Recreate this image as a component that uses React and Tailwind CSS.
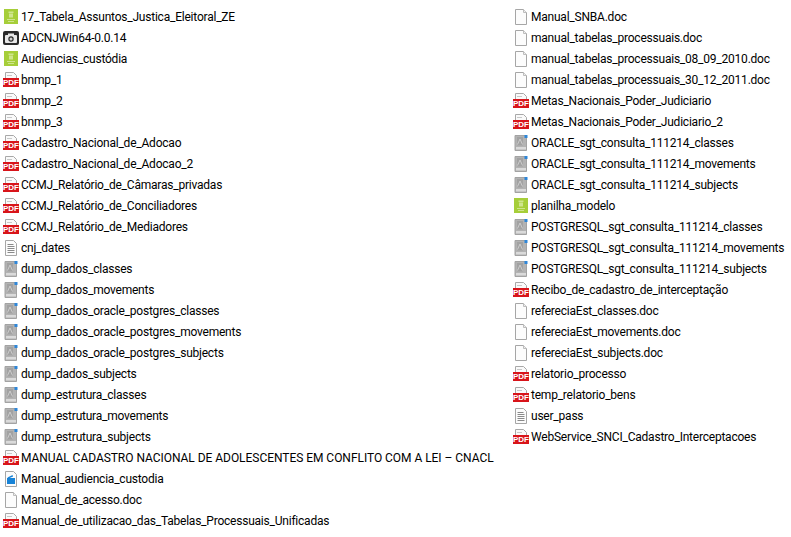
import React from 'react'

const PdfIcon = () => (
  <svg width="16" height="16" viewBox="0 0 16 16" className="shrink-0">
    <path d="M2.500 .5h8l3 3v4h-11z" fill="#fafafa" stroke="#a8a8a8" />
    <path d="M4 3.500h5" stroke="#c8c8c8" />
    <rect x="0" y="6" width="16" height="9" fill="#d8141a" />
    <text x="8" y="13.200" textAnchor="middle" fill="#fff" fontSize="8" fontWeight="700" fontFamily="Liberation Sans, sans-serif">PDF</text>
  </svg>
)

const SheetIcon = () => (
  <svg width="16" height="16" viewBox="0 0 16 16" className="shrink-0">
    <rect x="1" y="0" width="14" height="15" fill="#a6ce39" />
    <path d="M5.500 2.500h5v1.500h-5zM6 4.500h4v4H6z" fill="#cfe58e" />
    <path d="M4 10h8v1H4zM5 12h6v1H5z" fill="#cfe58e" />
  </svg>
)

const CameraIcon = () => (
  <svg width="16" height="16" viewBox="0 0 16 16" className="shrink-0">
    <rect x="0" y="1" width="16" height="14" rx="2" fill="#2b2b2b" />
    <rect x="2" y="5" width="12" height="8" rx="1" fill="#e8e8e8" />
    <rect x="5" y="3.500" width="6" height="2" fill="#e8e8e8" />
    <circle cx="8" cy="9" r="2.700" fill="#2b2b2b" />
    <circle cx="8" cy="9" r="1.500" fill="#d0d0d0" />
  </svg>
)

const TextIcon = () => (
  <svg width="16" height="16" viewBox="0 0 16 16" className="shrink-0">
    <path d="M2.500 .5h8l3 3v12h-11z" fill="#fcfcfc" stroke="#a6a6a6" />
    <path d="M4.500 4.500h6M4.500 6.500h7M4.500 8.500h7M4.500 10.500h7M4.500 12.500h7" stroke="#8a8a8a" />
  </svg>
)

const DocIcon = () => (
  <svg width="16" height="16" viewBox="0 0 16 16" className="shrink-0">
    <path d="M2.500 .5h8l3 3v12h-11z" fill="#fcfcfc" stroke="#a6a6a6" />
    <path d="M10.500 .5v3h3" fill="#eee" stroke="#bdbdbd" />
  </svg>
)

const DumpIcon = () => (
  <svg width="16" height="16" viewBox="0 0 16 16" className="shrink-0">
    <path d="M2 .5h10l1.500 1.500v13.500H2z" fill="#b3b3b3" stroke="#a3a3a3" />
    <path d="M4 2h6v8.500H4z" fill="#a2a2a2" />
    <path d="M4.500 9.500 7 4l2.500 5.500" fill="none" stroke="#cdcdcd" />
    <rect x="3" y="12" width="10" height="2.500" fill="#dadada" />
    <rect x="11.500" y="0" width="3" height="3" fill="#2e86d8" />
  </svg>
)

const BlueIcon = () => (
  <svg width="16" height="16" viewBox="0 0 16 16" className="shrink-0">
    <path d="M2.500 .5h8l3 3v12h-11z" fill="#fcfcfc" stroke="#a6a6a6" />
    <rect x="4" y="7" width="8" height="6" fill="#1883d7" />
    <path d="M4.500 6.500 9.500 4l.6 1.400-4.600 2.100z" fill="#1883d7" />
  </svg>
)

const icons = { pdf: PdfIcon, sheet: SheetIcon, cam: CameraIcon, txt: TextIcon, doc: DocIcon, dump: DumpIcon, blue: BlueIcon }

const leftFiles = [
  ['sheet', '17_Tabela_Assuntos_Justica_Eleitoral_ZE'],
  ['cam', 'ADCNJWin64-0.0.14'],
  ['sheet', 'Audiencias_custódia'],
  ['pdf', 'bnmp_1'],
  ['pdf', 'bnmp_2'],
  ['pdf', 'bnmp_3'],
  ['pdf', 'Cadastro_Nacional_de_Adocao'],
  ['pdf', 'Cadastro_Nacional_de_Adocao_2'],
  ['pdf', 'CCMJ_Relatório_de_Câmaras_privadas'],
  ['pdf', 'CCMJ_Relatório_de_Conciliadores'],
  ['pdf', 'CCMJ_Relatório_de_Mediadores'],
  ['txt', 'cnj_dates'],
  ['dump', 'dump_dados_classes'],
  ['dump', 'dump_dados_movements'],
  ['dump', 'dump_dados_oracle_postgres_classes'],
  ['dump', 'dump_dados_oracle_postgres_movements'],
  ['dump', 'dump_dados_oracle_postgres_subjects'],
  ['dump', 'dump_dados_subjects'],
  ['dump', 'dump_estrutura_classes'],
  ['dump', 'dump_estrutura_movements'],
  ['dump', 'dump_estrutura_subjects'],
  ['pdf', 'MANUAL CADASTRO NACIONAL DE ADOLESCENTES EM CONFLITO COM A LEI – CNACL', 'tracking-[-0.04px]'],
  ['blue', 'Manual_audiencia_custodia'],
  ['doc', 'Manual_de_acesso.doc'],
  ['pdf', 'Manual_de_utilizacao_das_Tabelas_Processuais_Unificadas'],
]

const rightFiles = [
  ['doc', 'Manual_SNBA.doc'],
  ['doc', 'manual_tabelas_processuais.doc'],
  ['doc', 'manual_tabelas_processuais_08_09_2010.doc'],
  ['doc', 'manual_tabelas_processuais_30_12_2011.doc'],
  ['pdf', 'Metas_Nacionais_Poder_Judiciario'],
  ['pdf', 'Metas_Nacionais_Poder_Judiciario_2'],
  ['dump', 'ORACLE_sgt_consulta_111214_classes'],
  ['dump', 'ORACLE_sgt_consulta_111214_movements'],
  ['dump', 'ORACLE_sgt_consulta_111214_subjects'],
  ['sheet', 'planilha_modelo'],
  ['dump', 'POSTGRESQL_sgt_consulta_111214_classes'],
  ['dump', 'POSTGRESQL_sgt_consulta_111214_movements'],
  ['dump', 'POSTGRESQL_sgt_consulta_111214_subjects'],
  ['pdf', 'Recibo_de_cadastro_de_interceptação'],
  ['doc', 'refereciaEst_classes.doc'],
  ['doc', 'refereciaEst_movements.doc'],
  ['doc', 'refereciaEst_subjects.doc'],
  ['pdf', 'relatorio_processo'],
  ['pdf', 'temp_relatorio_bens'],
  ['txt', 'user_pass'],
  ['pdf', 'WebService_SNCI_Cadastro_Interceptacoes'],
]

const FileRow = ({ type, name, tracking }) => {
  const Icon = icons[type]
  return (
    <div className="flex h-[21px] items-center gap-[2px]">
      <Icon />
      <span className={`whitespace-nowrap text-[12px] text-black ${tracking || 'tracking-[-0.22px]'}`}>{name}</span>
    </div>
  )
}

export default function App() {
  return (
    <div className="flex h-[537px] w-[791px] overflow-hidden bg-white pl-[3px] pt-[6px] font-['Roboto',sans-serif]">
      <div className="w-[510px] shrink-0">
        {leftFiles.map(([type, name, tracking]) => <FileRow key={name} type={type} name={name} tracking={tracking} />)}
      </div>
      <div>
        {rightFiles.map(([type, name]) => <FileRow key={name} type={type} name={name} />)}
      </div>
    </div>
  )
}
